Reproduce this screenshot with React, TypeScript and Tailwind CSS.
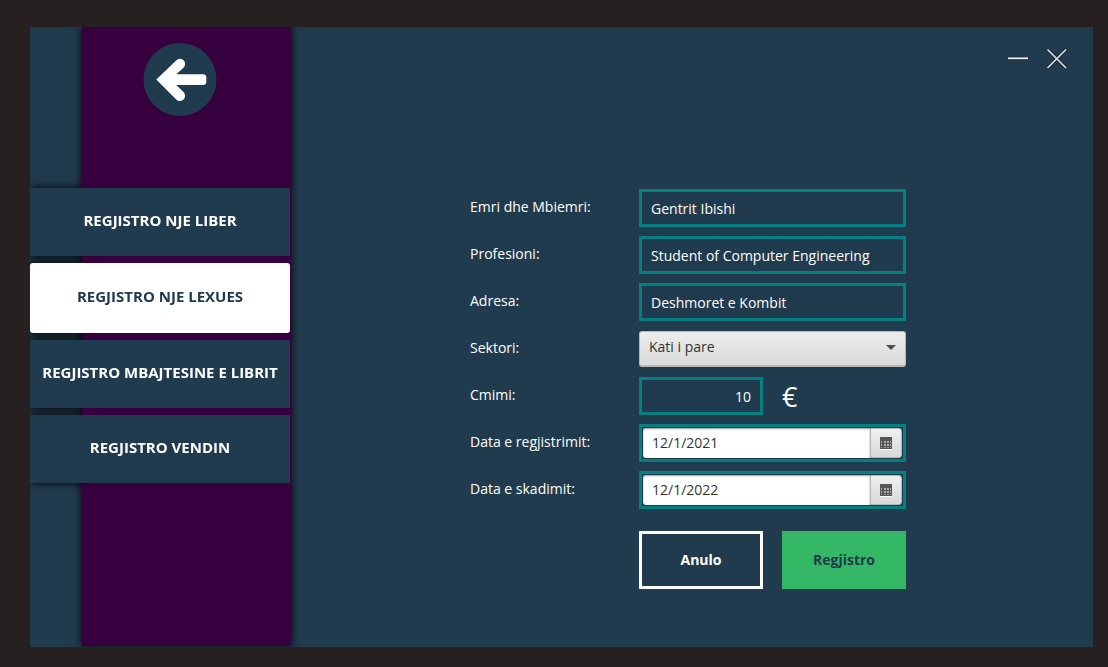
import { useState } from "react";

const menu = [
  "REGJISTRO NJE LIBER",
  "REGJISTRO NJE LEXUES",
  "REGJISTRO MBAJTESINE E LIBRIT",
  "REGJISTRO VENDIN",
];

const labelClass = "w-[169px] shrink-0 pb-0.5 text-white";
const fieldClass =
  "h-[38px] border-3 border-[#048080] bg-transparent px-[9px] text-white outline-none";

function CalendarIcon() {
  return (
    <svg width="12" height="13" viewBox="0 0 12 13" shapeRendering="crispEdges" aria-hidden="true">
      <path d="M0 12h12v1H0z" fill="#fff" />
      <path d="M0 0h12v12H0z" fill="#555" />
      {[4, 7, 10].map((y) =>
        [1, 4, 7, 10].map((x) => (
          <path
            key={`${x}-${y}`}
            d={`M${x} ${y}h${x === 4 || x === 7 ? 2 : 1}v${y === 10 ? 1 : 2}h-${x === 4 || x === 7 ? 2 : 1}z`}
            fill={y === 10 ? "#999" : "#aaa"}
          />
        )),
      )}
    </svg>
  );
}

function DateRow({ id, label, value }: { id: string; label: string; value: string }) {
  return (
    <div className="flex items-center">
      <label htmlFor={id} className={labelClass}>
        {label}
      </label>
      <div className="flex h-[38px] flex-1 border-3 border-[#048080] p-px">
        <input
          id={id}
          defaultValue={value}
          className="min-w-0 flex-1 rounded-l-[3px] bg-white px-[9px] text-[#333] inset-shadow-[0_1px_2px_#999] outline-none"
        />
        <button
          type="button"
          aria-label={`${label} kalendari`}
          className="flex w-8 items-center justify-center rounded-r-[3px] border border-[#b5b5b5] bg-linear-to-b from-[#efefef] to-[#d9d9d9]"
        >
          <CalendarIcon />
        </button>
      </div>
    </div>
  );
}

function TextRow({ id, label, value }: { id: string; label: string; value: string }) {
  return (
    <div className="flex items-center">
      <label htmlFor={id} className={labelClass}>
        {label}
      </label>
      <input id={id} defaultValue={value} className={`${fieldClass} min-w-0 flex-1`} />
    </div>
  );
}

export default function App() {
  const [active, setActive] = useState(1);

  return (
    <div className="flex min-h-screen bg-[#262020] pt-[27px] pr-[15px] pb-5 pl-[30px] font-['Open_Sans','Noto_Sans',sans-serif] text-sm">
      <div className="flex flex-1 overflow-hidden bg-[#213b4e]">
        <aside className="mb-px flex w-[261px] shrink-0 flex-col bg-[linear-gradient(to_right,transparent_52px,#36003f_52px)] pr-px drop-shadow-[0_0_5px_#000]">
          <button
            type="button"
            aria-label="Kthehu"
            className="mt-[15px] ml-[113px] size-[74px] rounded-full"
          >
            <svg viewBox="143 42 74 74" className="size-full" aria-hidden="true">
              <circle cx="180" cy="79.5" r="36.5" fill="#213b4e" />
              <path
                d="M156.3 79.5 176.2 60.4A5.1 5.1 0 0 1 185 64.2C185 65.6 184.4 66.8 183.5 67.8L176.3 74.3H203Q206.3 74.3 206.3 77.4V82Q206.3 85 203 85H176.3L183.5 92Q185 93.6 185 95.8A5.1 5.1 0 0 1 176.2 99.4Z"
                fill="#fff"
              />
            </svg>
          </button>
          <nav className="mt-[72px] flex flex-col gap-[7px]">
            {menu.map((item, i) => (
              <button
                key={item}
                type="button"
                onClick={() => setActive(i)}
                className={
                  i === active
                    ? "h-[70px] rounded-[3px] bg-white pb-0.5 text-[15px] font-bold text-[#213b4e]"
                    : "h-[68px] bg-[#213b4e] pb-0.5 text-[15px] font-bold text-white"
                }
              >
                {item}
              </button>
            ))}
          </nav>
        </aside>

        <main className="flex min-w-0 flex-1 flex-col">
          <header className="flex justify-end gap-[15px] pt-[20px] pr-6">
            <button type="button" aria-label="Minimizo" className="size-6">
              <svg viewBox="0 0 24 24" className="size-full" aria-hidden="true">
                <path d="M2 11.5h20" stroke="#111c25" strokeWidth="3.6" opacity=".5" />
                <path d="M2 11.3h20" stroke="#eee" strokeWidth="1.8" />
              </svg>
            </button>
            <button type="button" aria-label="Mbyll" className="size-6">
              <svg viewBox="0 0 24 24" className="size-full" aria-hidden="true">
                <path d="M2.5 2.5 21 21M21 2.5 2.5 21" stroke="#111c25" strokeWidth="3.6" opacity=".5" />
                <path d="M2.5 2.5 21 21M21 2.5 2.5 21" stroke="#ddd" strokeWidth="1.7" />
              </svg>
            </button>
          </header>

          <div className="flex justify-center pt-[118px] pr-2">
            <form
              className="flex w-[436px] flex-col gap-[9px]"
              onSubmit={(e) => e.preventDefault()}
            >
              <TextRow id="emri" label="Emri dhe Mbiemri:" value="Gentrit Ibishi" />
              <TextRow id="profesioni" label="Profesioni:" value="Student of Computer Engineering" />
              <TextRow id="adresa" label="Adresa:" value="Deshmoret e Kombit" />

              <div className="flex h-[38px] items-center">
                <label htmlFor="sektori" className={labelClass}>
                  Sektori:
                </label>
                <div className="relative flex-1">
                  <select
                    id="sektori"
                    className="block h-9 w-full appearance-none rounded-[3px] border border-b-2 border-[#b8b8b8] bg-linear-to-b from-[#ececec] to-[#dadada] px-[9px] pb-[3px] text-[#333] outline-none"
                  >
                    <option>Kati i pare</option>
                    <option>Kati i dyte</option>
                  </select>
                  <svg
                    width="10"
                    height="5"
                    viewBox="0 0 10 5"
                    className="pointer-events-none absolute top-[14px] right-[10px]"
                    aria-hidden="true"
                  >
                    <path d="M0 0h10L5 5z" fill="#4d4d4d" />
                  </svg>
                </div>
              </div>

              <div className="flex h-[38px] items-center">
                <label htmlFor="cmimi" className={labelClass}>
                  Cmimi:
                </label>
                <input id="cmimi" defaultValue="10" className={`${fieldClass} w-[124px] text-right`} />
                <span className="ml-[19px] text-[27px] leading-none text-white">€</span>
              </div>

              <DateRow id="regjistrimi" label="Data e regjistrimit:" value="12/1/2021" />
              <DateRow id="skadimi" label="Data e skadimit:" value="12/1/2022" />

              <div className="mt-[13px] grid grid-cols-2 gap-[19px] pl-[169px]">
                <button type="button" className="h-[58px] border-3 border-white font-bold text-white">
                  Anulo
                </button>
                <button type="submit" className="h-[58px] bg-[#34b865] font-bold text-[#213b4e]">
                  Regjistro
                </button>
              </div>
            </form>
          </div>
        </main>
      </div>
    </div>
  );
}
